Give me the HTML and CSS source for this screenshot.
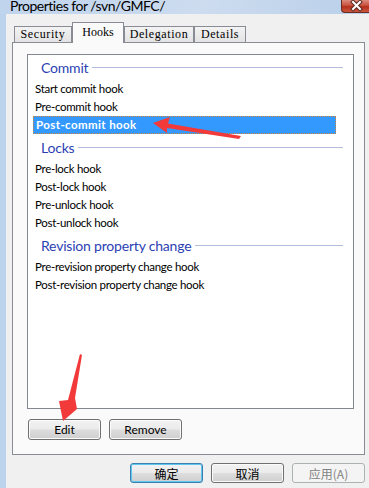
FILE: index.html
```html
<!DOCTYPE html>
<html>
<head>
<meta charset="utf-8">
<link rel="stylesheet" href="styles.css">
</head>
<body>
<div class="window">
  <div class="titlebar">
    <span class="title">Properties for /svn/GMFC/</span>
    <span class="close">
      <svg width="26" height="12" viewBox="0 0 26 12">
        <path d="M10 2 L17 9 M17 2 L10 9" stroke="#5a2a22" stroke-width="4" stroke-linecap="square"/>
        <path d="M10 2 L17 9 M17 2 L10 9" stroke="#ffffff" stroke-width="2" stroke-linecap="square"/>
      </svg>
    </span>
  </div>
  <div class="frame">
    <div class="edge"></div>
    <div class="client">
      <div class="tabs">
        <div class="tab tab-security">Security</div>
        <div class="tab tab-hooks active">Hooks</div>
        <div class="tab tab-delegation">Delegation</div>
        <div class="tab tab-details">Details</div>
      </div>
      <div class="page">
        <div class="list">
          <div class="group">
            <div class="group-header">Commit</div>
            <div class="item">Start commit hook</div>
            <div class="item">Pre-commit hook</div>
            <div class="item selected">Post-commit hook</div>
          </div>
          <div class="group">
            <div class="group-header">Locks</div>
            <div class="item">Pre-lock hook</div>
            <div class="item">Post-lock hook</div>
            <div class="item">Pre-unlock hook</div>
            <div class="item">Post-unlock hook</div>
          </div>
          <div class="group">
            <div class="group-header">Revision property change</div>
            <div class="item">Pre-revision property change hook</div>
            <div class="item">Post-revision property change hook</div>
          </div>
        </div>
        <div class="page-buttons">
          <div class="btn">Edit</div>
          <div class="btn">Remove</div>
        </div>
      </div>
      <div class="dialog-buttons">
        <div class="btn btn-cjk btn-default">确定</div>
        <div class="btn btn-cjk">取消</div>
        <div class="btn btn-cjk btn-disabled">应用(A)</div>
      </div>
    </div>
  </div>
  <svg class="arrows" width="369" height="488" viewBox="0 0 369 488">
    <polygon points="153,123 170,117 168,123.5 241,136 239,139 167,128 167,133" fill="#f23a3a"/>
    <polygon points="80,354 82,355 75,398 77,409 63,421 59,401 68,400" fill="#f23a3a"/>
  </svg>
</div>
</body>
</html>
```

FILE: styles.css
```css
* {
  box-sizing: border-box;
}

html, body {
  margin: 0;
  padding: 0;
}

body {
  width: 369px;
  height: 488px;
  overflow: hidden;
  background: #f0f0f0;
  font-family: Lato, "Noto Sans CJK SC", sans-serif;
  font-size: 12px;
  color: #000;
}

.window {
  position: relative;
  width: 369px;
  height: 488px;
  display: flex;
  flex-direction: column;
}

.titlebar {
  height: 14px;
  flex: none;
  display: flex;
  align-items: flex-start;
  background: linear-gradient(to right, #bfd4ed, #cddcef 55%, #b9cfea);
  overflow: hidden;
}

.title {
  padding-left: 10px;
  font-size: 14px;
  letter-spacing: -0.5px;
  line-height: 12px;
  color: #000;
  white-space: nowrap;
}

.close {
  margin-left: auto;
  width: 28px;
  height: 13px;
  border: 1px solid #6b2a22;
  border-top: none;
  border-right: none;
  border-radius: 0 0 0 4px;
  background: linear-gradient(#dc8b7e, #c8523f 45%, #b6301c 55%, #c9553d);
  display: flex;
  align-items: center;
  justify-content: center;
}

.close svg {
  display: block;
}

.frame {
  flex: 1;
  display: flex;
}

.edge {
  width: 6px;
  flex: none;
  background: #bcd2ed;
}

.client {
  flex: 1;
  padding: 8px 4px 0 6px;
  display: flex;
  flex-direction: column;
}

.tabs {
  display: flex;
  align-items: flex-end;
  height: 20px;
  padding-left: 2px;
  position: relative;
  z-index: 1;
}

.tab {
  height: 16px;
  border: 1px solid #898c95;
  border-bottom: none;
  background: linear-gradient(#f3f3f3, #e3e3e3);
  font-family: "Liberation Serif", serif;
  font-size: 12px;
  letter-spacing: 0.6px;
  display: flex;
  align-items: center;
  justify-content: center;
  white-space: nowrap;
}

.tab-security { width: 58px; }
.tab-hooks { width: 52px; }
.tab-delegation { width: 70px; }
.tab-details { width: 52px; }

.tab.active {
  height: 21px;
  margin-bottom: -1px;
  background: #fafafa;
  padding-bottom: 2px;
  letter-spacing: 0;
}

.page {
  height: 413px;
  border: 1px solid #898c95;
  background: #fafafa;
  padding: 11px 10px 0 14px;
  display: flex;
  flex-direction: column;
}

.list {
  height: 355px;
  flex: none;
  border: 1px solid #828790;
  background: #fff;
}

.group + .group .group-header {
  margin-top: 1px;
}

.group-header {
  height: 25px;
  display: flex;
  align-items: center;
  padding: 0 10px 0 13px;
  color: #2b3fb3;
  font-size: 14px;
  letter-spacing: -0.2px;
  white-space: nowrap;
}

.group-header::after {
  content: "";
  flex: 1;
  height: 1px;
  margin-left: 4px;
  background: #b3bddb;
}

.item {
  height: 18px;
  line-height: 18px;
  width: 303px;
  margin-left: 5px;
  padding-left: 2px;
  font-size: 11.5px;
  letter-spacing: -0.3px;
  white-space: nowrap;
}

.item.selected {
  background: #3399ff;
  color: #fff;
  font-weight: bold;
  letter-spacing: 0.4px;
  border: 1px dotted #c98545;
  padding-left: 2px;
  line-height: 16px;
}

.page-buttons {
  display: flex;
  gap: 8px;
  margin-top: 10px;
  padding-left: 1px;
}

.btn {
  width: 73px;
  height: 21px;
  border: 1px solid #707070;
  border-radius: 3px;
  background: linear-gradient(#f2f2f2 0%, #ebebeb 48%, #dddddd 52%, #cfcfcf 100%);
  box-shadow: inset 0 0 0 1px #fbfbfb;
  display: flex;
  align-items: center;
  justify-content: center;
  font-size: 12px;
}

.dialog-buttons {
  display: flex;
  justify-content: flex-end;
  gap: 8px;
  margin-top: 8px;
}

.btn-cjk {
  height: 20px;
  font-family: "Noto Sans CJK SC", sans-serif;
  font-size: 12px;
}

.btn-default {
  border-color: #3c7fb1;
  box-shadow: inset 0 0 0 1px #5fc6f0;
}

.btn-disabled {
  border-color: #adb2b5;
  background: #f4f4f4;
  box-shadow: none;
  color: #838383;
}

.arrows {
  position: absolute;
  left: 0;
  top: 0;
  pointer-events: none;
}
```
